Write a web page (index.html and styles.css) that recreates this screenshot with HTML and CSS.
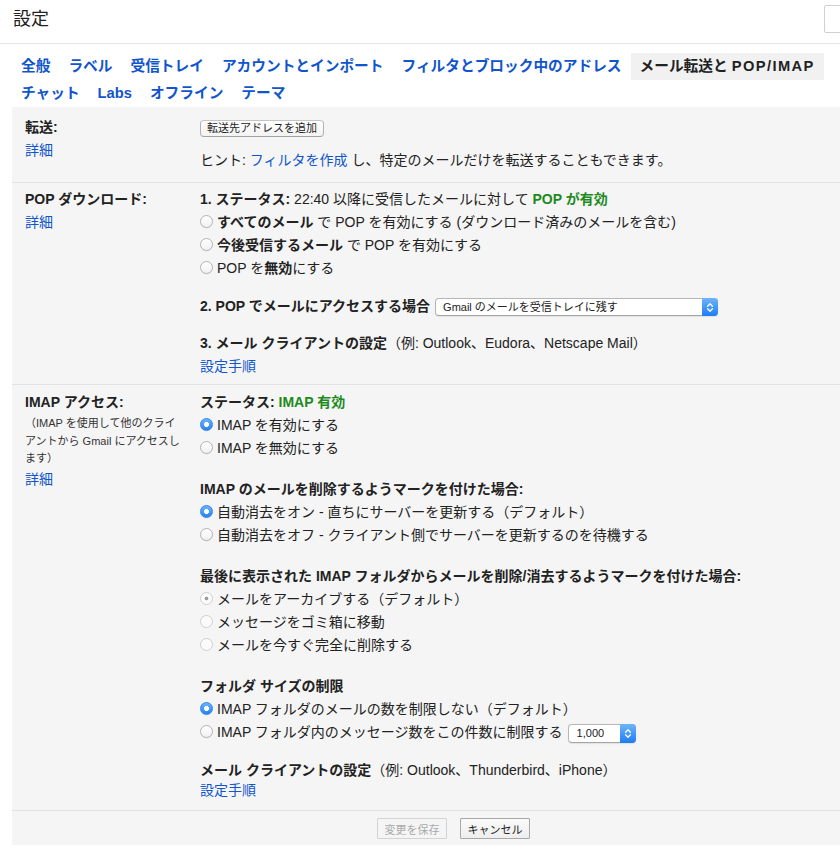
FILE: index.html
```html
<!DOCTYPE html>
<html lang="ja">
<head>
<meta charset="utf-8">
<title>設定</title>
<link rel="stylesheet" href="styles.css">
</head>
<body>
<header class="top">
  <h1 class="title">設定</h1>
  <button class="corner-btn" type="button" aria-label="メニュー"></button>
</header>

<nav class="tabs">
  <div class="tab-row">
    <a class="tab" href="#">全般</a>
    <a class="tab" href="#">ラベル</a>
    <a class="tab" href="#">受信トレイ</a>
    <a class="tab" href="#">アカウントとインポート</a>
    <a class="tab" href="#">フィルタとブロック中のアドレス</a>
    <a class="tab active" href="#">メール転送と <span class="wide-latin">POP/IMAP</span></a>
  </div>
  <div class="tab-row">
    <a class="tab" href="#">チャット</a>
    <a class="tab" href="#">Labs</a>
    <a class="tab" href="#">オフライン</a>
    <a class="tab" href="#">テーマ</a>
  </div>
</nav>

<main class="panel">
  <section class="sect sect-fwd">
    <div class="label-col">
      <div class="label">転送:</div>
      <a class="link" href="#">詳細</a>
    </div>
    <div class="body-col">
      <div class="line"><button class="mac-btn" type="button">転送先アドレスを追加</button></div>
      <div class="line hint">ヒント: <a class="link" href="#">フィルタを作成</a> し、特定のメールだけを転送することもできます。</div>
    </div>
  </section>

  <section class="sect sect-pop">
    <div class="label-col">
      <div class="label">POP ダウンロード:</div>
      <a class="link" href="#">詳細</a>
    </div>
    <div class="body-col">
      <div class="line"><b>1. ステータス:</b> 22:40 以降に受信したメールに対して <b class="ok">POP が有効</b></div>
      <label class="line opt"><input class="radio" type="radio" name="pop"><b>すべてのメール</b> で POP を有効にする (ダウンロード済みのメールを含む)</label>
      <label class="line opt"><input class="radio" type="radio" name="pop"><b>今後受信するメール</b> で POP を有効にする</label>
      <label class="line opt"><input class="radio" type="radio" name="pop">POP を<b>無効</b>にする</label>

      <div class="line gap"><b>2. POP でメールにアクセスする場合</b><span class="popup popup-wide"><span class="popup-text">Gmail のメールを受信トレイに残す</span><span class="popup-arrow"><svg width="8" height="11" viewBox="0 0 8 11"><path d="M1.6 4.2 L4 1.8 L6.4 4.2 M1.6 6.8 L4 9.2 L6.4 6.8" fill="none" stroke="#fff" stroke-width="1.3" stroke-linecap="round" stroke-linejoin="round"/></svg></span></span></div>

      <div class="line gap-sm"><b>3. メール クライアントの設定</b>（例: Outlook、Eudora、Netscape Mail）</div>
      <div class="line"><a class="link" href="#">設定手順</a></div>
    </div>
  </section>

  <section class="sect sect-imap">
    <div class="label-col">
      <div class="label">IMAP アクセス:</div>
      <div class="note">（IMAP を使用して他のクライアントから Gmail にアクセスします）</div>
      <a class="link" href="#">詳細</a>
    </div>
    <div class="body-col">
      <div class="group">
        <div class="line"><b>ステータス:</b> <b class="ok">IMAP 有効</b></div>
        <label class="line opt"><input class="radio" type="radio" name="imap" checked>IMAP を有効にする</label>
        <label class="line opt"><input class="radio" type="radio" name="imap">IMAP を無効にする</label>
      </div>
      <div class="group">
        <div class="line"><b>IMAP のメールを削除するようマークを付けた場合:</b></div>
        <label class="line opt"><input class="radio" type="radio" name="expunge" checked>自動消去をオン - 直ちにサーバーを更新する（デフォルト）</label>
        <label class="line opt"><input class="radio" type="radio" name="expunge">自動消去をオフ - クライアント側でサーバーを更新するのを待機する</label>
      </div>
      <div class="group">
        <div class="line"><b>最後に表示された IMAP フォルダからメールを削除/消去するようマークを付けた場合:</b></div>
        <label class="line opt"><input class="radio" type="radio" name="del" checked disabled>メールをアーカイブする（デフォルト）</label>
        <label class="line opt"><input class="radio" type="radio" name="del" disabled>メッセージをゴミ箱に移動</label>
        <label class="line opt"><input class="radio" type="radio" name="del" disabled>メールを今すぐ完全に削除する</label>
      </div>
      <div class="group">
        <div class="line"><b>フォルダ サイズの制限</b></div>
        <label class="line opt"><input class="radio" type="radio" name="size" checked>IMAP フォルダのメールの数を制限しない（デフォルト）</label>
        <label class="line opt"><input class="radio" type="radio" name="size">IMAP フォルダ内のメッセージ数をこの件数に制限する<span class="popup popup-small"><span class="popup-text">1,000</span><span class="popup-arrow"><svg width="8" height="11" viewBox="0 0 8 11"><path d="M1.6 4.2 L4 1.8 L6.4 4.2 M1.6 6.8 L4 9.2 L6.4 6.8" fill="none" stroke="#fff" stroke-width="1.3" stroke-linecap="round" stroke-linejoin="round"/></svg></span></span></label>
      </div>
      <div class="group group-last">
        <div class="line"><b>メール クライアントの設定</b>（例: Outlook、Thunderbird、iPhone）</div>
        <div class="line line-tight"><a class="link" href="#">設定手順</a></div>
      </div>
    </div>
  </section>

  <div class="actions">
    <button class="act-btn" type="button" disabled>変更を保存</button>
    <button class="act-btn act-cancel" type="button">キャンセル</button>
  </div>
</main>
</body>
</html>
```

FILE: styles.css
```css
* { box-sizing: border-box; }

html, body {
  margin: 0;
  padding: 0;
}

body {
  width: 840px;
  overflow-x: hidden;
  background: #fff;
  color: #222;
  font-family: "Liberation Sans", Arial, "Noto Sans CJK JP", sans-serif;
  font-size: 14px;
}

/* header */
.top {
  display: flex;
  align-items: flex-start;
  height: 44px;
  border-bottom: 1px solid #e5e5e5;
}

.title {
  margin: 0;
  padding-left: 13px;
  font-size: 18px;
  font-weight: normal;
  line-height: 38px;
}

.corner-btn {
  flex-shrink: 0;
  margin: 5px -24px 0 auto;
  width: 40px;
  height: 28px;
  border: 1px solid #d0d0d0;
  border-radius: 2px;
  background: #fff;
}

/* tabs */
.tabs {
  margin-top: 9px;
  padding-left: 12px;
}

.tab-row {
  display: flex;
  height: 27px;
}

.tab {
  padding: 0 9px;
  line-height: 27px;
  font-size: 14.7px;
  font-weight: bold;
  color: #15c;
  text-decoration: none;
  white-space: nowrap;
}

.tab.active {
  padding: 0 9px;
  background: #f1f1f1;
  color: #222;
}

.wide-latin {
  letter-spacing: 1.4px;
}

/* panel */
.panel {
  margin-left: 12px;
  padding-top: 3px;
  background: #f5f5f5;
}

.sect {
  display: grid;
  grid-template-columns: 188px 1fr;
  border-bottom: 1px solid #e3e3e3;
}

.sect-fwd { padding: 6px 0 10px; }
.sect-pop { padding: 5px 0 6px; }
.sect-imap { padding: 6px 0 5px; }

.label-col {
  padding-left: 13px;
  line-height: 23px;
}

.label {
  font-weight: bold;
}

.note {
  width: 157px;
  margin-top: 1px;
  font-size: 11px;
  line-height: 17.5px;
  color: #333;
}

.link {
  color: #15c;
  text-decoration: none;
}

.body-col {
  line-height: 23px;
}

.line {
  display: block;
  height: 23px;
  white-space: nowrap;
}

.hint { margin-top: 10px; }
.gap { margin-top: 15px; }
.gap-sm { margin-top: 14px; }

.line-tight {
  margin-top: -3px;
  margin-bottom: 3px;
}

.group + .group { margin-top: 18px; }
.group.group-last { margin-top: 15px; }

.ok { color: #1d8a1d; }

/* radios */
.radio {
  appearance: none;
  -webkit-appearance: none;
  display: inline-block;
  width: 13px;
  height: 13px;
  margin: 0 4px 0 0;
  vertical-align: -1px;
  border: 1px solid #b3b3b3;
  border-radius: 50%;
  background: linear-gradient(#ffffff, #f1f1f1);
  box-shadow: 0 0.5px 0.5px rgba(0, 0, 0, 0.08);
}

.radio:checked {
  border-color: #3584e8;
  background:
    radial-gradient(circle, #fff 0 2.2px, transparent 2.8px),
    linear-gradient(#6ab4fb, #2783f4);
}

.radio:disabled {
  border-color: #cfcfcf;
  background: #fbfbfb;
  box-shadow: none;
}

.radio:checked:disabled {
  background:
    radial-gradient(circle, #9d9d9d 0 1.6px, transparent 2.2px),
    #fbfbfb;
}

/* mac style buttons and popups */
.mac-btn {
  height: 17px;
  padding: 0 6px;
  vertical-align: middle;
  border: 1px solid #b2b2b2;
  border-top-color: #c4c4c4;
  border-bottom-color: #a2a2a2;
  border-radius: 4px;
  background: linear-gradient(#ffffff, #f3f3f3);
  font-family: inherit;
  font-size: 11px;
  line-height: 15px;
  color: #222;
}

.popup {
  display: inline-flex;
  align-items: stretch;
  margin-left: 5px;
  vertical-align: middle;
  border: 1px solid #b7b7b7;
  border-bottom-color: #a5a5a5;
  border-radius: 4px;
  background: #fff;
  box-shadow: 0 0.5px 1px rgba(0, 0, 0, 0.08);
}

.popup-wide { width: 283px; height: 18px; }
.popup-small { width: 68px; height: 19px; }

.popup-text {
  flex: 1;
  padding-left: 7px;
  font-size: 11px;
  line-height: 16px;
  color: #222;
}

.popup-small .popup-text { padding-left: 8px; line-height: 17px; }

.popup-arrow {
  display: flex;
  align-items: center;
  justify-content: center;
  width: 16px;
  margin: -1px -1px -1px 0;
  border-radius: 0 4px 4px 0;
  background: linear-gradient(#6fb5fb, #1e7df3);
}

/* footer actions */
.actions {
  display: flex;
  gap: 13px;
  padding: 7px 0 6px 365px;
}

.act-btn {
  width: 70px;
  height: 21px;
  padding: 0;
  border: 1px solid #d3d3d3;
  border-radius: 1px;
  background: #f5f5f5;
  font-family: inherit;
  font-size: 11px;
  color: #aaa;
}

.act-cancel {
  border-color: #a8a8a8;
  background: linear-gradient(#fafafa, #eeeeee);
  color: #222;
}
```
